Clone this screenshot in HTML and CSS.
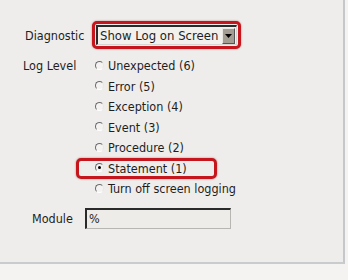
FILE: index.html
```html
<!DOCTYPE html>
<html>
<head>
<meta charset="utf-8">
<link rel="stylesheet" href="styles.css">
</head>
<body>
<div class="panel">
  <div class="row diag">
    <span class="label l-diag">Diagnostic</span>
    <div class="hl-select">
      <div class="select">
        <span class="sel-text">Show Log on Screen</span>
        <span class="sel-btn"><svg width="7" height="4" viewBox="0 0 7 4"><path d="M0 0H7L3.5 4Z" fill="#000"/></svg></span>
      </div>
    </div>
  </div>
  <div class="row levels">
    <span class="label l-level">Log Level</span>
    <ul class="radios">
      <li class="opt"><span class="radio"></span>Unexpected (6)</li>
      <li class="opt"><span class="radio"></span>Error (5)</li>
      <li class="opt"><span class="radio"></span>Exception (4)</li>
      <li class="opt"><span class="radio"></span>Event (3)</li>
      <li class="opt"><span class="radio"></span>Procedure (2)</li>
      <li class="opt checked"><span class="radio"></span>Statement (1)<span class="hl-opt"></span></li>
      <li class="opt"><span class="radio"></span>Turn off screen logging</li>
    </ul>
  </div>
  <div class="row module">
    <span class="label l-mod">Module</span>
    <div class="input">%</div>
  </div>
</div>
</body>
</html>
```

FILE: styles.css
```css
html, body {
  margin: 0;
  padding: 0;
  background: #f4f3f1;
}
body {
  width: 348px;
  height: 280px;
  overflow: hidden;
  font-family: "DejaVu Sans Condensed", "DejaVu Sans", sans-serif;
  font-size: 12.5px;
  color: #1e1e1e;
}
.panel {
  width: 345px;
  height: 264px;
  box-sizing: border-box;
  background: #efedeb;
  border-right: 2px solid #c5c8ca;
  border-bottom: 2px solid #c9cccd;
  padding-top: 20px;
}
.row {
  display: flex;
}
.label {
  white-space: nowrap;
}
.diag {
  align-items: center;
  height: 30px;
}
.l-diag {
  margin-left: 25px;
  width: 67px;
}
.hl-select {
  border: 3px solid #c4161c;
  border-radius: 5px;
  padding: 1px;
  box-shadow: 0 0 2px rgba(120, 0, 0, 0.5);
  background: #efedeb;
}
.select {
  width: 141px;
  height: 20px;
  box-sizing: border-box;
  border-top: 2px solid #2a2a2a;
  border-left: 2px solid #2a2a2a;
  border-right: 1px solid #d8d6d2;
  border-bottom: 1px solid #d8d6d2;
  background: #f2f1ee;
  display: flex;
  align-items: center;
  justify-content: space-between;
}
.sel-text {
  padding-left: 2px;
  line-height: 17px;
  white-space: nowrap;
  font-size: 13px;
}
.sel-btn {
  width: 13px;
  height: 16px;
  background: #a39d94;
  border-left: 1px solid #e8e6e2;
  border-top: 1px solid #e8e6e2;
  border-right: 1px solid #555;
  border-bottom: 1px solid #555;
  box-sizing: border-box;
  display: flex;
  align-items: center;
  justify-content: center;
  margin-right: 1px;
}
.levels {
  margin-top: 6px;
}
.l-level {
  margin-left: 23px;
  width: 72px;
  line-height: 20px;
}
.radios {
  list-style: none;
  margin: 0;
  padding: 0;
}
.opt {
  position: relative;
  height: 20.5px;
  line-height: 20px;
  display: flex;
  align-items: center;
  white-space: nowrap;
}
.radio {
  width: 9px;
  height: 9px;
  box-sizing: border-box;
  border-radius: 50%;
  border: 1.5px solid;
  border-color: #6a6a6a #e6e6e6 #ffffff #6a6a6a;
  background: #f4f3f1;
  margin-right: 4px;
  position: relative;
  top: -1px;
}
.checked .radio::after {
  content: "";
  position: absolute;
  left: 1.5px;
  top: 1.5px;
  width: 3px;
  height: 3px;
  border-radius: 50%;
  background: #000;
}
.hl-opt {
  position: absolute;
  left: -19px;
  top: -1px;
  width: 141px;
  height: 21px;
  border: 3px solid #c4161c;
  border-radius: 5px;
  box-sizing: border-box;
  box-shadow: 0 0 2px rgba(120, 0, 0, 0.5);
}
.module {
  margin-top: 8px;
  align-items: center;
}
.l-mod {
  margin-left: 32px;
  width: 53px;
}
.input {
  width: 146px;
  height: 21px;
  box-sizing: border-box;
  border-top: 2px solid #2a2a2a;
  border-left: 2px solid #2a2a2a;
  border-right: 1px solid #b8b6b2;
  border-bottom: 1px solid #b8b6b2;
  background: #eeece9;
  line-height: 17px;
  padding-left: 2px;
}
```
